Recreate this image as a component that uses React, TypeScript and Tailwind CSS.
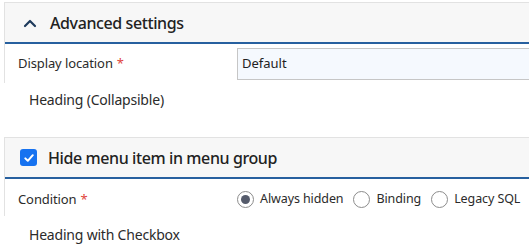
import React from 'react';

const font = { fontFamily: '"Noto Sans", "Open Sans", Arial, sans-serif' };

const Required: React.FC = () => <span className="text-[#e0433c] ml-[4px]">*</span>;

const Radio: React.FC<{ label: string; checked?: boolean }> = ({ label, checked }) => (
  <label className="flex items-center gap-[6px] text-[12.5px] tracking-[-0.1px] text-[#2b2b2b]">
    <span className="w-[17px] h-[17px] rounded-full border-[1.5px] border-[#8c8c8c] flex items-center justify-center bg-white">
      {checked && <span className="w-[9px] h-[9px] rounded-full bg-[#555b6b]"></span>}
    </span>
    {label}
  </label>
);

export default function App() {
  return (
    <div className="w-[529px] h-[250px] overflow-hidden bg-white" style={font}>
      <div className="pt-[2px] pl-[4px]">
        <div className="w-[620px] border-l border-t border-[#e2e2e2]">
          <div className="h-[41px] bg-[#f7f7f7] border-b-2 border-[#27609f] flex items-center">
            <svg width="14" height="10" viewBox="0 0 14 10" className="ml-[18px]">
              <path d="M2 8 L7 3 L12 8" fill="none" stroke="#1e3a5c" strokeWidth="2.2" strokeLinecap="round" strokeLinejoin="round" />
            </svg>
            <span className="ml-[13px] text-[16px] font-medium tracking-[-0.4px] text-[#222]">Advanced settings</span>
          </div>
          <div className="h-[39px] flex items-center">
            <div className="w-[232px] pl-[13px] text-[13px] tracking-[-0.1px] text-[#2b2b2b]">
              Display location<Required />
            </div>
            <div className="h-[32px] flex-1 border border-[#c6c6c6] bg-[#f5f9fe] flex items-center pl-[4px] text-[13px] text-[#222]">
              Default
            </div>
          </div>
        </div>
      </div>
      <div className="pl-[29px] h-[36px] pt-[6px] text-[14px] tracking-[-0.2px] text-[#2b2b2b]">Heading (Collapsible)</div>

      <div className="mt-[18px] pl-[4px]">
        <div className="w-[620px] border-l border-t border-[#e2e2e2]">
          <div className="h-[41px] bg-[#f7f7f7] border-b-2 border-[#27609f] flex items-center">
            <span className="ml-[15px] w-[17px] h-[17px] rounded-[3px] bg-[#1672f0] flex items-center justify-center">
              <svg width="12" height="12" viewBox="0 0 12 12">
                <path d="M2.3 6.4 L4.8 8.8 L9.8 3.2" fill="none" stroke="white" strokeWidth="2" strokeLinecap="round" strokeLinejoin="round" />
              </svg>
            </span>
            <span className="ml-[11px] text-[16px] font-medium tracking-[-0.4px] text-[#222]">Hide menu item in menu group</span>
          </div>
          <div className="h-[37px] flex items-center pt-[4px]">
            <div className="w-[232px] pl-[13px] text-[13px] tracking-[-0.1px] text-[#2b2b2b]">
              Condition<Required />
            </div>
            <div className="flex items-center gap-[10px]">
              <Radio label="Always hidden" checked />
              <Radio label="Binding" />
              <Radio label="Legacy SQL" />
            </div>
          </div>
        </div>
      </div>
      <div className="pl-[29px] pt-[8px] text-[14px] tracking-[-0.2px] text-[#2b2b2b]">Heading with Checkbox</div>
    </div>
  );
}
